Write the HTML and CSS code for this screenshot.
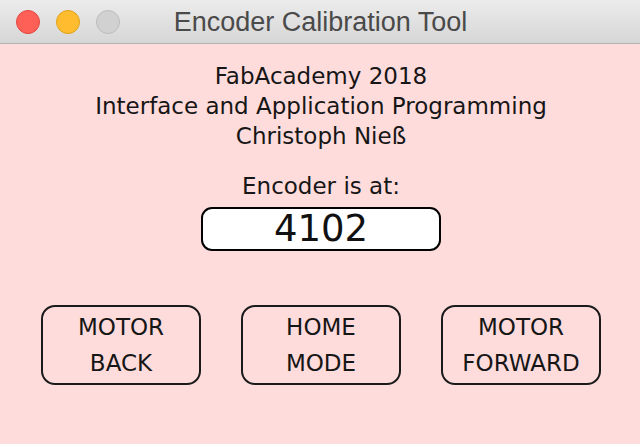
FILE: index.html
```html
<!DOCTYPE html>
<html>
<head>
<meta charset="utf-8">
<title>Encoder Calibration Tool</title>
<link rel="stylesheet" href="styles.css">
</head>
<body>
<div class="window">
  <div class="titlebar">
    <div class="lights">
      <span class="light red"></span>
      <span class="light yellow"></span>
      <span class="light gray"></span>
    </div>
    <div class="title">Encoder Calibration Tool</div>
  </div>
  <div class="content">
    <div class="heading">
      <div>FabAcademy 2018</div>
      <div>Interface and Application Programming</div>
      <div>Christoph Nieß</div>
    </div>
    <div class="label">Encoder is at:</div>
    <div class="value">4102</div>
    <div class="buttons">
      <div class="btn"><span>MOTOR</span><span>BACK</span></div>
      <div class="btn"><span>HOME</span><span>MODE</span></div>
      <div class="btn"><span>MOTOR</span><span>FORWARD</span></div>
    </div>
  </div>
</div>
</body>
</html>
```
FILE: styles.css
```css
html, body {
  margin: 0;
  padding: 0;
}
body {
  width: 640px;
  height: 444px;
  overflow: hidden;
  background: #ffdcdc;
  font-family: "DejaVu Sans", sans-serif;
}
.window {
  display: flex;
  flex-direction: column;
  height: 444px;
}
.titlebar {
  position: relative;
  height: 43px;
  border-bottom: 1px solid #b3b3b3;
  background: linear-gradient(#ececec, #d6d6d6);
  display: flex;
  align-items: center;
  justify-content: center;
}
.lights {
  position: absolute;
  left: 16px;
  top: 10px;
  display: flex;
  gap: 16px;
}
.light {
  width: 22px;
  height: 22px;
  border-radius: 50%;
  border: 1px solid transparent;
}
.red { background: #fe5f57; border-color: #e2463f; }
.yellow { background: #febc2e; border-color: #e1a116; }
.gray { background: #d1d1d1; border-color: #bcbcbc; }
.title {
  font-family: "Liberation Sans", Arial, sans-serif;
  font-size: 27px;
  color: #4a4a4a;
  margin-left: 1px;
  margin-top: 1px;
}
.content {
  flex: 1;
  display: flex;
  flex-direction: column;
  align-items: center;
  padding: 17px 0 0 2px;
  color: #161616;
  font-size: 23px;
}
.heading {
  line-height: 30px;
  text-align: center;
}
.label {
  margin-top: 20px;
  line-height: 30px;
}
.value {
  margin-top: 6px;
  width: 236px;
  height: 40px;
  border: 2px solid #000;
  border-radius: 11px;
  background: #fff;
  font-size: 37px;
  line-height: 40px;
  text-align: center;
  color: #111;
}
.buttons {
  margin-top: 54px;
  display: flex;
  gap: 40px;
}
.btn {
  width: 156px;
  height: 76px;
  border: 2px solid #1a1a1a;
  border-radius: 14px;
  display: flex;
  flex-direction: column;
  align-items: center;
  justify-content: center;
  line-height: 36px;
  font-size: 23px;
}
```
